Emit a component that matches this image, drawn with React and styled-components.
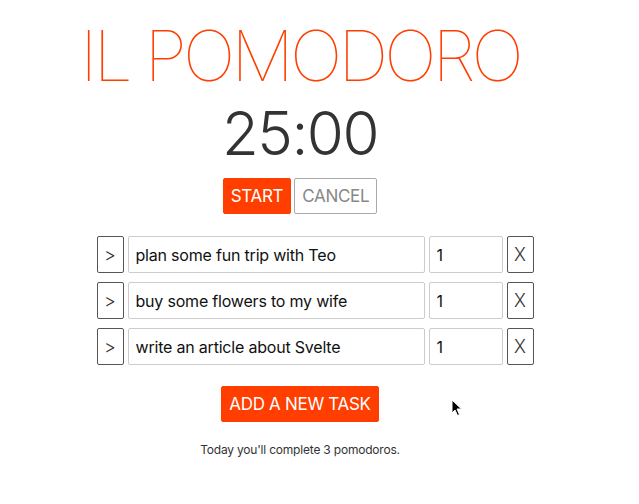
import React from 'react';
import styled, { createGlobalStyle } from 'styled-components';

const tasks = [
  { id: 1, description: 'plan some fun trip with Teo', expected: 1 },
  { id: 2, description: 'buy some flowers to my wife', expected: 1 },
  { id: 3, description: 'write an article about Svelte', expected: 1 },
];

const App = () => {
  const total = tasks.reduce((sum, t) => sum + t.expected, 0);

  return (
    <>
      <GlobalStyle />
      <Main>
        <Title>IL POMODORO</Title>
        <Timer>25:00</Timer>
        <Controls>
          <PrimaryButton>START</PrimaryButton>
          <GhostButton>CANCEL</GhostButton>
        </Controls>
        <TaskList>
          {tasks.map((task) => (
            <TaskRow key={task.id}>
              <IconButton>&gt;</IconButton>
              <TextInput defaultValue={task.description} />
              <CountInput defaultValue={task.expected} />
              <IconButton>X</IconButton>
            </TaskRow>
          ))}
        </TaskList>
        <AddButton>ADD A NEW TASK</AddButton>
        <Summary>Today you&apos;ll complete {total} pomodoros.</Summary>
      </Main>
      <Cursor width="12" height="18" viewBox="0 0 12 18">
        <path d="M1 1 L1 14 L4 11 L6.5 16.5 L8.5 15.5 L6 10 L10.5 10 Z" fill="#000" stroke="#fff" strokeWidth="1" />
      </Cursor>
    </>
  );
};

const GlobalStyle = createGlobalStyle`
  body {
    margin: 0;
    background: #fff;
    color: #333;
    font-family: Inter, "Liberation Sans", sans-serif;
  }
`;

const Main = styled.main`
  width: 600px;
  padding-top: 21px;
  display: flex;
  flex-direction: column;
  align-items: center;
  text-align: center;
`;

const Title = styled.h1`
  margin: 0;
  font-size: 70px;
  line-height: 1;
  font-weight: 100;
  color: #ff3e00;
  letter-spacing: -4px;
`;

const Timer = styled.div`
  margin-top: 12px;
  font-size: 60px;
  line-height: 1;
  font-weight: 300;
  color: #333;
  letter-spacing: -1.5px;
`;

const Controls = styled.div`
  display: flex;
  gap: 3px;
  margin-top: 15px;
`;

const BaseButton = styled.button`
  height: 36px;
  padding: 0 7px;
  font-family: inherit;
  font-size: 17px;
  letter-spacing: -0.3px;
  border-radius: 2px;
  cursor: pointer;
`;

const PrimaryButton = styled(BaseButton)`
  background: #ff3e00;
  border: 1px solid #ff3e00;
  color: #fff;
`;

const GhostButton = styled(BaseButton)`
  background: #fff;
  border: 1px solid #aaa;
  color: #888;
`;

const TaskList = styled.ul`
  list-style: none;
  margin: 22px 0 0;
  padding: 0 0 0 30px;
  display: flex;
  flex-direction: column;
  gap: 9px;
`;

const TaskRow = styled.li`
  display: flex;
  gap: 4px;
`;

const IconButton = styled.button`
  width: 27px;
  height: 37px;
  padding: 0;
  background: #fff;
  border: 1px solid #555;
  border-radius: 2px;
  font-family: inherit;
  font-size: 18px;
  font-weight: 300;
  color: #333;
`;

const TextInput = styled.input`
  box-sizing: border-box;
  width: 297px;
  height: 37px;
  padding: 0 7px;
  border: 1px solid #ccc;
  border-radius: 2px;
  font-family: inherit;
  font-size: 16px;
  letter-spacing: -0.2px;
  color: #111;
`;

const CountInput = styled(TextInput)`
  width: 74px;
`;

const AddButton = styled(PrimaryButton)`
  margin-top: 21px;
`;

const Summary = styled.p`
  margin: 20px 0 0;
  font-size: 12px;
  letter-spacing: -0.2px;
  color: #333;
`;

const Cursor = styled.svg`
  position: absolute;
  left: 451px;
  top: 399px;
`;

export default App;
